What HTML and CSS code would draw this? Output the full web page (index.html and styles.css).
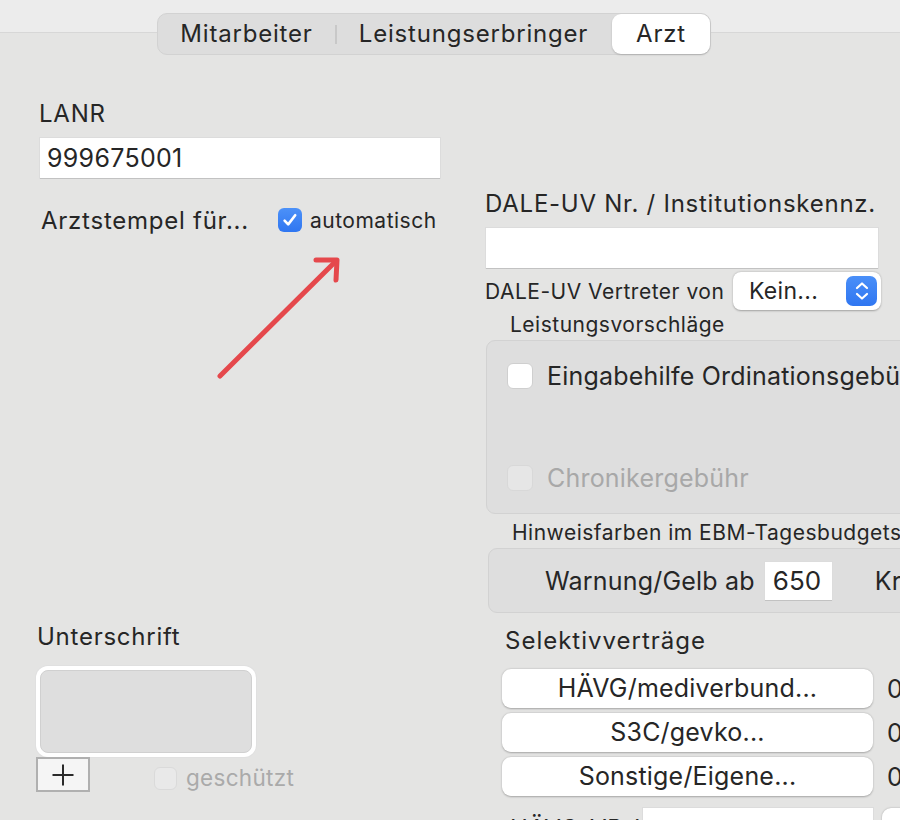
FILE: index.html
```html
<!doctype html>
<html lang="de">
<head>
  <meta charset="utf-8">
  <title>Arzt</title>
  <link rel="stylesheet" href="styles.css">
</head>
<body class="app">
  <div class="toolbar">
    <div class="segmented">
      <div class="segment seg-mitarbeiter">Mitarbeiter</div>
      <div class="segment seg-leistung">Leistungserbringer</div>
      <div class="segment seg-arzt selected">Arzt</div>
    </div>
  </div>

  <div class="content">
    <!-- linke Spalte oben -->
    <div class="col-left top">
      <div class="label lanr-label">LANR</div>
      <div class="text-field lanr-field">999675001</div>
      <div class="stamp-row">
        <span class="label stamp-label">Arztstempel für...</span>
        <span class="checkbox checked">
          <svg width="18" height="18" viewBox="0 0 18 18"><path d="M3.6 9.6 L7.2 13.4 L14.2 4.2" fill="none" stroke="#fff" stroke-width="2.6" stroke-linecap="round" stroke-linejoin="round"/></svg>
        </span>
        <span class="small-label">automatisch</span>
      </div>
      <svg class="arrow" width="140" height="140" viewBox="0 0 140 140">
        <g fill="none" stroke="#e5484c" stroke-width="5" stroke-linecap="round" stroke-linejoin="round">
          <path d="M12 127 L128 12"/>
          <path d="M108 11 L129 11 L128 31"/>
        </g>
      </svg>
    </div>

    <!-- rechte Spalte oben -->
    <div class="col-right top">
      <div class="label dale-label">DALE-UV Nr. / Institutionskennz.</div>
      <div class="text-field dale-field"></div>
      <div class="vertreter-row">
        <span class="small-label">DALE-UV Vertreter von</span>
        <div class="popup">
          <span>Kein...</span>
          <span class="stepper">
            <svg width="20" height="22" viewBox="0 0 20 22"><g fill="none" stroke="#fff" stroke-width="2.2" stroke-linecap="round" stroke-linejoin="round"><path d="M5 8 L10 3.5 L15 8"/><path d="M5 14 L10 18.5 L15 14"/></g></svg>
          </span>
        </div>
      </div>
      <div class="small-label group-title">Leistungsvorschläge</div>
      <div class="group group-vorschlaege">
        <div class="check-row">
          <span class="checkbox"></span>
          <span class="big-label">Eingabehilfe Ordinationsgebühr</span>
        </div>
        <div class="check-row disabled">
          <span class="checkbox"></span>
          <span class="big-label">Chronikergebühr</span>
        </div>
      </div>
      <div class="small-label group-title hinweis-title">Hinweisfarben im EBM-Tagesbudgetsbalken</div>
      <div class="group group-hinweis">
        <span class="big-label">Warnung/Gelb ab</span>
        <span class="text-field num-field">650</span>
        <span class="big-label kritisch">Kritisch/Rot ab</span>
      </div>
    </div>

    <!-- linke Spalte unten -->
    <div class="col-left bottom">
      <div class="label sign-label">Unterschrift</div>
      <div class="image-well"><div class="image-well-inner"></div></div>
      <div class="sign-tools">
        <div class="plus-button">
          <svg width="24" height="24" viewBox="0 0 24 24"><path d="M12 1.5 V22.5 M1.5 12 H22.5" stroke="#2a2a2a" stroke-width="2"/></svg>
        </div>
        <span class="checkbox disabled-box"></span>
        <span class="disabled-text">geschützt</span>
      </div>
    </div>

    <!-- rechte Spalte unten -->
    <div class="col-right bottom">
      <div class="label sel-label">Selektivverträge</div>
      <div class="button-row"><div class="push-button">HÄVG/mediverbund...</div><span class="count">0</span></div>
      <div class="button-row"><div class="push-button">S3C/gevko...</div><span class="count">0</span></div>
      <div class="button-row"><div class="push-button">Sonstige/Eigene...</div><span class="count">0</span></div>
      <div class="id-row">
        <span class="label id-label">HÄVG-VP-ID</span>
        <span class="text-field id-field"></span>
        <span class="id-button"></span>
      </div>
    </div>
  </div>
</body>
</html>
```

FILE: styles.css
```css
.app {
  margin: 0;
  width: 900px;
  height: 820px;
  overflow: hidden;
  background: #e4e4e3;
  color: #262626;
  font-family: 'Inter', 'Liberation Sans', sans-serif;
}

.toolbar {
  height: 32px;
  background: #ececec;
  border-bottom: 1px solid #d7d7d7;
  display: flex;
  padding-left: 157px;
}

.segmented {
  margin-top: 13px;
  height: 42px;
  display: flex;
  align-items: center;
  background: #dddddd;
  border: 1px solid #d2d2d2;
  border-radius: 10px;
  box-sizing: border-box;
  position: relative;
  z-index: 1;
}

.segment {
  height: 40px;
  line-height: 40px;
  text-align: center;
  font-size: 24px;
  letter-spacing: 0.8px;
  position: relative;
}

.seg-mitarbeiter { width: 177px; }
.seg-leistung { width: 277px; }
.seg-arzt { width: 98px; }

.seg-leistung::before {
  content: '';
  position: absolute;
  left: 0;
  top: 11px;
  height: 19px;
  border-left: 2px solid #c8c8c8;
}

.segment.selected {
  background: #fff;
  border-radius: 9px;
  box-shadow: 0 1px 2px rgba(0,0,0,0.18);
}

.content {
  display: grid;
  grid-template-columns: 449px 1fr;
  grid-template-rows: 588px 1fr;
  padding-left: 36px;
}

.col-left, .col-right {
  display: flex;
  flex-direction: column;
  align-items: flex-start;
}

.col-left > *, .col-right > *, .group > * {
  flex: none;
}

.col-left.top { position: relative; }

.label {
  font-size: 24px;
  line-height: 29px;
  letter-spacing: 0.75px;
  white-space: nowrap;
}

.small-label {
  font-size: 21px;
  line-height: 25px;
  letter-spacing: 0.5px;
  white-space: nowrap;
}

.big-label {
  font-size: 25px;
  line-height: 30px;
  letter-spacing: 0.2px;
  white-space: nowrap;
}

.text-field {
  background: #fff;
  box-shadow: 0 1px 0 #c2c2c2, 0 0 0 1px #dcdcdc;
  box-sizing: border-box;
  font-size: 25px;
  line-height: 40px;
}

.lanr-label {
  margin: 66px 0 0 3px;
}

.lanr-field {
  margin: 10px 0 0 4px;
  width: 400px;
  height: 40px;
  padding-left: 7px;
  letter-spacing: 0.3px;
}

.stamp-row {
  margin: 30px 0 0 5px;
  height: 24px;
  display: flex;
  align-items: center;
}

.stamp-label {
  width: 237px;
}

.checkbox {
  width: 24px;
  height: 24px;
  box-sizing: border-box;
  border-radius: 6px;
  background: #fff;
  border: 1px solid #cfcfcf;
  display: flex;
  align-items: center;
  justify-content: center;
  flex: none;
}

.checkbox.checked {
  background: linear-gradient(#4c91f8, #2f76f1);
  border: 0;
}

.stamp-row .small-label {
  margin-left: 8px;
}

.arrow {
  position: absolute;
  left: 172px;
  top: 216px;
}

.dale-label {
  margin-top: 156px;
}

.dale-field {
  margin: 10px 0 0 1px;
  width: 392px;
  height: 40px;
}

.vertreter-row {
  margin-top: 4px;
  width: 396px;
  height: 38px;
  display: flex;
  align-items: center;
  justify-content: space-between;
}

.popup {
  width: 148px;
  height: 38px;
  box-sizing: border-box;
  background: #fff;
  border-radius: 8px;
  box-shadow: 0 0.5px 2px rgba(0,0,0,0.3);
  display: flex;
  align-items: center;
  justify-content: space-between;
  padding: 0 4px 0 16px;
  font-size: 23px;
  letter-spacing: 0.3px;
}

.stepper {
  width: 31px;
  height: 30px;
  border-radius: 7px;
  background: linear-gradient(#4a8ff8, #2f76f1);
  display: flex;
  align-items: center;
  justify-content: center;
}

.group-title {
  margin: 2px 0 0 25px;
}

.group {
  width: 440px;
  box-sizing: border-box;
  background: #dedede;
  border: 1px solid #d2d2d2;
  border-radius: 9px;
}

.group-vorschlaege {
  margin: 3px 0 0 1px;
  height: 174px;
  padding: 22px 0 22px 20px;
  display: flex;
  flex-direction: column;
  justify-content: space-between;
}

.check-row {
  display: flex;
  align-items: center;
  gap: 14px;
  height: 26px;
}

.check-row .checkbox {
  width: 26px;
  height: 26px;
}

.check-row.disabled .checkbox {
  background: #e6e6e6;
  border-color: #d8d8d8;
}

.check-row.disabled .big-label {
  color: #a8a8a8;
}

.hinweis-title {
  margin: 6px 0 0 27px;
}

.group-hinweis {
  margin: 3px 0 0 3px;
  height: 65px;
  padding-left: 56px;
  display: flex;
  align-items: center;
}

.num-field {
  margin-left: 10px;
  width: 67px;
  height: 38px;
  line-height: 38px;
  padding-left: 8px;
  font-size: 26px;
}

.kritisch {
  margin-left: 43px;
}

.sign-label {
  margin-top: 1px;
  margin-left: 1px;
}

.image-well {
  margin-top: 15px;
  width: 220px;
  height: 91px;
  box-sizing: border-box;
  padding: 4px;
  background: #fff;
  border-radius: 12px;
  box-shadow: 0 0 0 1px #e0e0e0;
}

.image-well-inner {
  height: 100%;
  box-sizing: border-box;
  background: #dedede;
  border: 1px solid #d0d0d0;
  border-radius: 8px;
}

.sign-tools {
  display: flex;
  align-items: center;
}

.plus-button {
  width: 54px;
  height: 35px;
  box-sizing: border-box;
  border: 2px solid #b0b0b0;
  background: #f5f5f5;
  display: flex;
  align-items: center;
  justify-content: center;
}

.disabled-box {
  margin-left: 64px;
  margin-top: 7px;
  width: 23px;
  height: 23px;
  background: #e9e9e9;
  border-color: #dadada;
}

.disabled-text {
  margin: 6px 0 0 9px;
  font-size: 22.5px;
  letter-spacing: 0.3px;
  color: #aaaaaa;
}

.sel-label {
  margin: 5px 0 0 20px;
  letter-spacing: 1px;
}

.button-row {
  margin-top: 5px;
  display: flex;
  align-items: center;
}

.sel-label + .button-row {
  margin-top: 14px;
}

.push-button {
  margin-left: 17px;
  width: 371px;
  height: 39px;
  line-height: 39px;
  text-align: center;
  background: #fff;
  border-radius: 9px;
  box-shadow: 0 0.5px 2px rgba(0,0,0,0.28);
  font-size: 25px;
  letter-spacing: 0.2px;
}

.count {
  margin-left: 14px;
  font-size: 25px;
}

.id-row {
  margin-top: 12px;
  display: flex;
  align-items: flex-start;
}

.id-label {
  margin: 6px 0 0 25px;
  width: 133px;
}

.id-field {
  width: 230px;
  height: 40px;
}

.id-button {
  margin-left: 9px;
  width: 40px;
  height: 38px;
  border-radius: 9px;
  background: #fff;
  box-shadow: 0 0.5px 2px rgba(0,0,0,0.28);
}
```
